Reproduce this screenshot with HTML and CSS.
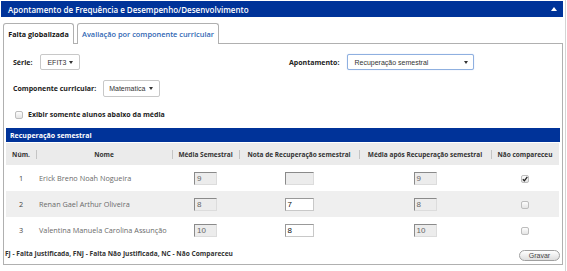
FILE: index.html
```html
<!DOCTYPE html>
<html lang="pt-BR">
<head>
<meta charset="utf-8">
<title>Apontamento</title>
<link rel="stylesheet" href="styles.css">
</head>
<body>
<div class="page">
  <div class="head">
    <span>Apontamento de Frequência e Desempenho/Desenvolvimento</span>
    <svg class="tri" width="6" height="4" viewBox="0 0 6 4"><path d="M0 4 L3 0 L6 4 Z" fill="#fff"/></svg>
  </div>
  <div class="tabs">
    <span class="tab tab-plain">Falta globalizada</span>
    <span class="tab tab-link">Avaliação por componente curricular</span>
  </div>
  <div class="box">
    <div class="frow first">
      <div class="fgroup">
        <span class="lbl">Série:</span>
        <span class="sel sel-serie"><span>EFIT3</span><svg width="4" height="3" viewBox="0 0 4 3"><path d="M0 0 H4 L2 3 Z" fill="#333"/></svg></span>
      </div>
      <div class="fgroup">
        <span class="lbl">Apontamento:</span>
        <span class="sel sel-apont"><span>Recuperação semestral</span><svg width="4" height="3" viewBox="0 0 4 3"><path d="M0 0 H4 L2 3 Z" fill="#333"/></svg></span>
      </div>
    </div>
    <div class="frow second">
      <div class="fgroup">
        <span class="lbl">Componente curricular:</span>
        <span class="sel sel-comp"><span>Matematica</span><svg width="4" height="3" viewBox="0 0 4 3"><path d="M0 0 H4 L2 3 Z" fill="#333"/></svg></span>
      </div>
    </div>
    <div class="chkrow">
      <span class="cb"></span>
      <span class="lbl">Exibir somente alunos abaixo da média</span>
    </div>
    <div class="gridhead">Recuperação semestral</div>
    <table class="grid">
      <colgroup>
        <col class="c-num"><col class="c-nome"><col class="c-media"><col class="c-nota"><col class="c-apos"><col class="c-nc">
      </colgroup>
      <thead>
        <tr>
          <th class="first-th">Núm.</th>
          <th>Nome</th>
          <th>Média Semestral</th>
          <th>Nota de Recuperação semestral</th>
          <th>Média após Recuperação semestral</th>
          <th>Não compareceu</th>
        </tr>
      </thead>
      <tbody>
        <tr>
          <td class="num">1</td>
          <td class="nome">Erick Breno Noah Nogueira</td>
          <td class="ctr"><span class="inp dis">9</span></td>
          <td class="ctr"><span class="inp dis wide"></span></td>
          <td class="ctr"><span class="inp dis">9</span></td>
          <td class="ctr"><span class="cb checked"><svg width="6" height="6" viewBox="0 0 6 6"><path d="M0.8 3.2 L2.4 4.8 L5.3 0.9" fill="none" stroke="#222" stroke-width="1.3"/></svg></span></td>
        </tr>
        <tr class="alt">
          <td class="num">2</td>
          <td class="nome">Renan Gael Arthur Oliveira</td>
          <td class="ctr"><span class="inp dis">8</span></td>
          <td class="ctr"><span class="inp wide">7</span></td>
          <td class="ctr"><span class="inp dis">8</span></td>
          <td class="ctr"><span class="cb"></span></td>
        </tr>
        <tr>
          <td class="num">3</td>
          <td class="nome">Valentina Manuela Carolina Assunção</td>
          <td class="ctr"><span class="inp dis">10</span></td>
          <td class="ctr"><span class="inp wide">8</span></td>
          <td class="ctr"><span class="inp dis">10</span></td>
          <td class="ctr"><span class="cb"></span></td>
        </tr>
      </tbody>
    </table>
    <div class="foot">
      <span class="legend">FJ - Falta Justificada, FNJ - Falta Não Justificada, NC - Não Compareceu</span>
      <span class="btn">Gravar</span>
    </div>
  </div>
</div>
</body>
</html>
```
FILE: styles.css
```css
* { box-sizing: border-box; }
html, body { margin: 0; padding: 0; background: #fff; }
body { font-family: "Open Sans", sans-serif; color: #222; }

.page {
  width: 566px;
  height: 271px;
  border-right: 1px solid #d4d4d4;
  padding: 1px 0 0 1px;
}

.head {
  width: 562px;
  height: 16px;
  background: #003399;
  color: #fff;
  font-weight: 600;
  font-size: 8px;
  display: flex;
  align-items: center;
  justify-content: space-between;
  padding: 0 6px 0 7px;
}

.tabs {
  display: flex;
  gap: 3px;
  margin-top: 6px;
  padding-left: 2px;
  height: 21px;
  margin-bottom: -1px;
  position: relative;
  z-index: 1;
}
.tab {
  height: 21px;
  background: #fff;
  border: 1px solid #b0b0b0;
  border-bottom: none;
  border-radius: 3px 3px 0 0;
  font-size: 7.2px;
  display: flex;
  align-items: center;
  justify-content: center;
}
.tab-plain { width: 71px; font-weight: 700; color: #111; }
.tab-link { width: 142px; font-weight: 600; color: #2f66b3; font-size: 7.4px; }

.box {
  margin-left: 2px;
  width: 560px;
  height: 222px;
  border: 1px solid #b0b0b0;
  padding: 0 1px;
}

.frow { display: flex; align-items: center; padding-left: 8px; }
.frow.first { margin-top: 10px; height: 16px; }
.frow.second { margin-top: 10px; height: 17px; }
.fgroup { display: flex; align-items: center; gap: 8px; }
.frow.first .fgroup:first-child { width: 276px; }
.second .fgroup { gap: 7px; }

.lbl { font-size: 7px; font-weight: 700; color: #222; }

.sel {
  display: flex;
  align-items: center;
  justify-content: space-between;
  height: 16px;
  border: 1px solid #c8c8c8;
  border-radius: 2px;
  background: #fff;
  font-family: "Liberation Sans", Arial, sans-serif;
  font-size: 7px;
  color: #333;
}
.sel-serie { width: 40px; padding: 0 6px 0 6px; }
.sel-apont { width: 127px; padding: 0 5px 0 6px; border-color: #8fb0e0; box-shadow: 0 0 1px #a9c4ee; }
.sel-comp { width: 57px; height: 17px; padding: 0 6px 0 5px; }

.chkrow {
  display: flex;
  align-items: center;
  gap: 5px;
  margin-top: 13px;
  padding-left: 10px;
  height: 9px;
}

.cb {
  display: inline-flex;
  align-items: center;
  justify-content: center;
  width: 8px;
  height: 8px;
  border: 1px solid #bdbdbd;
  border-radius: 2px;
  background: linear-gradient(#fdfdfd, #e4e4e4);
  vertical-align: middle;
}

.gridhead {
  margin: 9px 1px 0 1px;
  height: 14px;
  background: #003399;
  color: #fff;
  font-size: 7px;
  font-weight: 700;
  display: flex;
  align-items: center;
  padding-left: 4px;
}

.grid {
  margin: 1px 1px 0 1px;
  width: 553px;
  border-collapse: collapse;
  table-layout: fixed;
}
.c-num { width: 30px; }
.c-nome { width: 136px; }
.c-media { width: 67px; }
.c-nota { width: 120px; }
.c-apos { width: 132px; }
.c-nc { width: 68px; }

.grid th {
  height: 22px;
  background: #ebebeb linear-gradient(#c4c4c4, #c4c4c4) left center / 1px 9px no-repeat;
  font-size: 6.5px;
  font-weight: 700;
  color: #333;
  text-align: center;
  padding: 0;
  white-space: nowrap;
}
.grid th.first-th { background: #ebebeb; }

.grid td {
  height: 26px;
  padding: 0;
  font-size: 7.3px;
  color: #6a6a6a;
  vertical-align: middle;
}
.grid tr.alt td { background: #efefef; }
.grid td.num { text-align: center; color: #444; }
.grid td.nome { padding-left: 3px; white-space: nowrap; }
.grid td.ctr { text-align: center; }

.inp {
  display: inline-block;
  vertical-align: middle;
  width: 23px;
  height: 13px;
  text-align: left;
  padding: 1px 0 0 2px;
  font-family: "Liberation Sans", Arial, sans-serif;
  font-size: 8px;
  line-height: 10px;
  color: #111;
  background: #fff;
  border: 1px solid #999;
  border-right-color: #c8c8c8;
  border-bottom-color: #c8c8c8;
}
.inp.wide { width: 29px; }
.inp.dis {
  background: #ececec;
  color: #666;
  border-color: #8a8a8a #dcdcdc #dcdcdc #8a8a8a;
}

.foot {
  display: flex;
  align-items: center;
  justify-content: space-between;
  height: 21px;
  padding: 0 1px 0 0;
}
.legend { font-size: 6.6px; font-weight: 700; color: #333; }
.btn {
  width: 41px;
  height: 11px;
  border: 1px solid #a0a0a0;
  border-radius: 6px;
  background: linear-gradient(#ffffff, #dedede);
  font-family: "Liberation Sans", Arial, sans-serif;
  font-size: 7px;
  color: #444;
  display: flex;
  align-items: center;
  justify-content: center;
  margin-top: 3px;
}
```
